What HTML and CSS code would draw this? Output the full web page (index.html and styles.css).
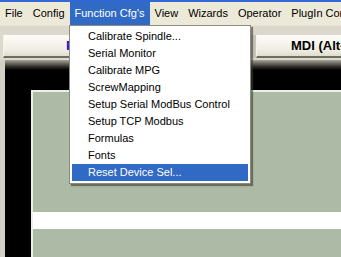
FILE: index.html
```html
<!DOCTYPE html>
<html lang="en">
<head>
    <meta charset="UTF-8">
    <title>Function Cfg's</title>
    <link rel="stylesheet" href="styles.css">
</head>
<body>
    <div class="titlebar"></div>
    <div class="menubar">
        <span class="menu m-file">File</span>
        <span class="menu m-config">Config</span>
        <span class="menu m-func active">Function Cfg's</span>
        <span class="menu m-view">View</span>
        <span class="menu m-wiz">Wizards</span>
        <span class="menu m-op">Operator</span>
        <span class="menu m-plug">PlugIn Control</span>
    </div>
    <div class="toolbar">
        <div class="btn btn-left"><span class="btn-text blue">Program Run</span></div>
        <div class="sep"></div>
        <div class="btn btn-right"><span class="btn-text">MDI (Alt-2)</span></div>
    </div>
    <div class="work">
        <div class="edge"></div>
        <div class="black">
            <div class="panel">
                <div class="green top"></div>
                <div class="stripe"></div>
                <div class="green"></div>
            </div>
        </div>
    </div>

    <div class="dropdown">
        <div class="item">Calibrate Spindle...</div>
        <div class="item">Serial Monitor</div>
        <div class="item">Calibrate MPG</div>
        <div class="item">ScrewMapping</div>
        <div class="item">Setup Serial ModBus Control</div>
        <div class="item">Setup TCP Modbus</div>
        <div class="item">Formulas</div>
        <div class="item">Fonts</div>
        <div class="item selected">Reset Device Sel...</div>
    </div>
</body>
</html>
```

FILE: styles.css
```css
body {
    margin: 0;
    width: 341px;
    height: 257px;
    overflow: hidden;
    background: #d4d0c8;
    font-family: "Liberation Sans", Arial, sans-serif;
    font-size: 11px;
    position: relative;
}
.titlebar {
    height: 2px;
    background: #3168d5;
}
.menubar {
    height: 23px;
    background: #ece9d8;
    display: flex;
    align-items: center;
    white-space: nowrap;
}
.menu {
    height: 23px;
    line-height: 23px;
    padding: 0 5px;
    color: #000;
}
.m-config { margin-left: 0; }
.m-func { margin-left: 0; }
.menu.active {
    background: #316ac5;
    color: #fff;
    padding: 0 5px 0 5px;
}
.m-view { margin-left: 0; }
.toolbar {
    height: 35px;
    background: #dcd8cc;
    display: flex;
    align-items: flex-end;
    padding-left: 3px;
    box-sizing: border-box;
    padding-bottom: 2px;
    border-top: 1px solid #e6e3d8;
}
.btn {
    height: 21px;
    background: linear-gradient(#fdfcf8, #f0eee4 70%, #e0ddce);
    border-bottom: 2px solid #6e6b60;
    border-left: 1px solid #f4f2ea;
    display: flex;
    align-items: center;
    white-space: nowrap;
    overflow: hidden;
    font-weight: bold;
    font-size: 13px;
}
.btn-left {
    width: 244px;
}
.btn-left .btn-text {
    margin-left: 62px;
}
.blue { color: #1010d8; }
.sep {
    width: 6px;
    height: 23px;
    background: linear-gradient(90deg, #8a877c 0, #8a877c 1px, #c8c4b8 1px);
    margin-left: 2px;
}
.btn-right {
    flex: 1;
}
.btn-right .btn-text {
    margin-left: 34px;
}
.work {
    display: flex;
    height: 197px;
}
.edge {
    width: 5px;
    background: #d4d0c8;
}
.black {
    flex: 1;
    background: linear-gradient(#a8a598 0, #3a3834 6px, #000 10px);
    padding: 30px 0 0 26px;
}
.panel {
    border-top: 2px solid #eef0e6;
    border-left: 2px solid #eef0e6;
    height: 100%;
    display: flex;
    flex-direction: column;
}
.green {
    background: #adbba6;
    flex: 1;
}
.green.top {
    flex: none;
    height: 120px;
}
.stripe {
    height: 17px;
    background: #fff;
}
.dropdown {
    position: absolute;
    left: 69px;
    top: 25px;
    width: 176px;
    padding: 2px;
    background: #fff;
    border: 1px solid #8d8a80;
    box-shadow: 2px 2px 1px rgba(60, 60, 50, 0.6);
}
.item {
    height: 17px;
    line-height: 17px;
    padding-left: 16px;
    color: #000;
    white-space: nowrap;
}
.item.selected {
    background: #316ac5;
    color: #fff;
}
```
